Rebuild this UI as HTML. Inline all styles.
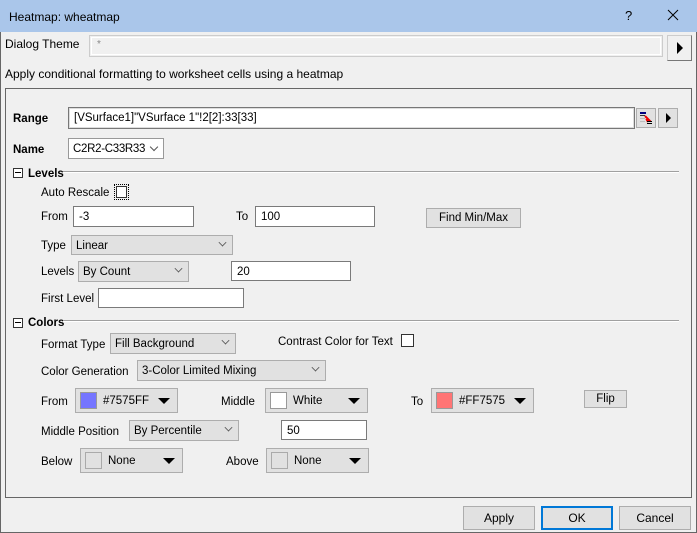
<!DOCTYPE html>
<html><head><meta charset="utf-8"><style>
*{box-sizing:border-box;margin:0;padding:0}
body{width:697px;height:533px;background:#f0f0f0;font-family:"Liberation Sans",sans-serif;font-size:11.5px;color:#000;position:relative;overflow:hidden}
.a{position:absolute;white-space:nowrap}
.t{position:absolute;white-space:nowrap;line-height:14px;margin-top:1px}
.b{font-weight:bold}
.in{position:absolute;background:#fff;border:1px solid #7a7a7a;padding-left:5px;line-height:20px}
.cb{position:absolute;background:#e1e1e1;border:1px solid #adadad;padding-left:4px;line-height:20px}
.cb .chev{position:absolute;right:6px;width:7px;height:7px;border-right:1px solid #555;border-bottom:1px solid #555;transform:rotate(45deg) scale(.8);top:3px}
.btn{position:absolute;background:#e1e1e1;border:1px solid #adadad;text-align:center}
.clr{position:absolute;background:#e1e1e1;border:1px solid #adadad}
.clr .sw{position:absolute;left:4px;top:3px;width:17px;height:17px;border:1px solid #999}
.clr .lb{position:absolute;left:27px;top:5px;line-height:14px}
.clr .ar{position:absolute;right:7px;top:9px;width:0;height:0;border-left:6px solid transparent;border-right:6px solid transparent;border-top:6px solid #000}
.plus{position:absolute;width:10px;height:10px;border:1px solid #333;background:#fff}
.plus:after{content:"";position:absolute;left:1px;top:3px;width:6px;height:1px;background:#000}
.ln{position:absolute;height:2px;border-top:1px solid #a0a0a0;border-bottom:1px solid #fff}
</style></head><body>
<div class="a" style="left:0;top:0;width:697px;height:32px;background:#aac6ea"></div>
<div class="t" style="left:9px;top:9px;font-size:12px">Heatmap: wheatmap</div>
<div class="t" style="left:625px;top:8px;font-size:13px">?</div>
<svg class="a" style="left:667px;top:9px" width="12" height="12"><path d="M1 1L11 11M11 1L1 11" stroke="#000" stroke-width="1"/></svg>
<div class="a" style="left:0;top:32px;width:1px;height:501px;background:#666"></div>
<div class="a" style="left:696px;top:32px;width:1px;height:501px;background:#666"></div>
<div class="a" style="left:0;top:532px;width:697px;height:1px;background:#666"></div>

<div class="t" style="left:5px;top:36px;font-size:12px">Dialog Theme</div>
<div class="a" style="left:89px;top:35px;width:574px;height:22px;border:1px solid #ccc;background:#f0f0f0"><div style="position:absolute;left:1px;top:1px;right:1px;bottom:1px;border:1px solid #fff"></div><span style="position:absolute;left:7px;top:3px;color:#888;font-size:10px">*</span></div>
<div class="a" style="left:667px;top:35px;width:25px;height:26px;background:#f0f0f0;border:1px solid #ccc;border-right-color:#777;border-bottom-color:#777"><div style="position:absolute;left:9px;top:6px;border-top:6px solid transparent;border-bottom:6px solid transparent;border-left:6px solid #000"></div></div>
<div class="t" style="left:5px;top:66px;font-size:12px">Apply conditional formatting to worksheet cells using a heatmap</div>

<div class="a" style="left:5px;top:88px;width:687px;height:410px;border:1px solid #666"></div>

<div class="t b" style="left:13px;top:111px">Range</div>
<div class="in" style="left:68px;top:107px;width:567px;height:22px;border-color:#777;box-shadow:inset 0 0 0 1px #ddd;line-height:20px">[VSurface1]"VSurface 1"!2[2]:33[33]</div>
<div class="btn" style="left:636px;top:108px;width:20px;height:20px;background:#e1e1e1"><svg width="18" height="18" style="position:absolute;left:0;top:0"><rect x="3" y="3" width="6" height="2" fill="#000080"/><rect x="3" y="6" width="5" height="1" fill="#333"/><rect x="3" y="9" width="5" height="1" fill="#bbb"/><rect x="3" y="12" width="5" height="1" fill="#bbb"/><path d="M8 7l4 4h-2l1 2" stroke="#e00" stroke-width="2" fill="none"/><rect x="10" y="12" width="5" height="1" fill="#000"/><rect x="10" y="14" width="5" height="1" fill="#000"/></svg></div>
<div class="btn" style="left:658px;top:108px;width:20px;height:20px"><div style="position:absolute;left:7px;top:4px;border-top:5px solid transparent;border-bottom:5px solid transparent;border-left:5px solid #000"></div></div>

<div class="t b" style="left:13px;top:142px">Name</div>
<div class="in" style="left:68px;top:138px;width:96px;height:21px;border-color:#999;padding-left:4px;letter-spacing:-0.3px">C2R2-C33R33<div style="position:absolute;right:6px;top:5px;width:6px;height:6px;border-right:1px solid #555;border-bottom:1px solid #555;transform:rotate(45deg)"></div></div>

<div class="plus" style="left:13px;top:168px"></div>
<div class="t b" style="left:28px;top:166px">Levels</div>
<div class="ln" style="left:63px;top:171px;width:616px"></div>

<div class="t" style="left:41px;top:185px">Auto Rescale</div>
<div class="a" style="left:114px;top:184px;width:15px;height:16px;border:1px dotted #000"><div style="position:absolute;left:1px;top:1px;width:11px;height:12px;border:1px solid #333;background:#fff"></div></div>

<div class="t" style="left:41px;top:209px">From</div>
<div class="in" style="left:73px;top:206px;width:121px;height:21px">-3</div>
<div class="t" style="left:236px;top:209px">To</div>
<div class="in" style="left:255px;top:206px;width:120px;height:21px">100</div>
<div class="btn" style="left:426px;top:208px;width:95px;height:20px;line-height:19px">Find Min/Max</div>

<div class="t" style="left:41px;top:238px">Type</div>
<div class="cb" style="left:71px;top:235px;width:162px;height:20px">Linear<div class="chev"></div></div>

<div class="t" style="left:41px;top:264px">Levels</div>
<div class="cb" style="left:78px;top:261px;width:111px;height:21px">By Count<div class="chev"></div></div>
<div class="in" style="left:231px;top:261px;width:120px;height:20px">20</div>

<div class="t" style="left:41px;top:291px">First Level</div>
<div class="in" style="left:98px;top:288px;width:146px;height:20px"></div>

<div class="plus" style="left:13px;top:318px"></div>
<div class="t b" style="left:28px;top:315px">Colors</div>
<div class="ln" style="left:63px;top:320px;width:616px"></div>

<div class="t" style="left:41px;top:337px">Format Type</div>
<div class="cb" style="left:110px;top:333px;width:126px;height:21px">Fill Background<div class="chev"></div></div>
<div class="t" style="left:278px;top:334px">Contrast Color for Text</div>
<div class="a" style="left:401px;top:334px;width:13px;height:13px;border:1px solid #333;background:#fff"></div>

<div class="t" style="left:41px;top:364px">Color Generation</div>
<div class="cb" style="left:137px;top:360px;width:189px;height:21px">3-Color Limited Mixing<div class="chev"></div></div>

<div class="t" style="left:41px;top:394px">From</div>
<div class="clr" style="left:75px;top:388px;width:103px;height:25px"><div class="sw" style="background:#7575ff"></div><div class="lb">#7575FF</div><div class="ar"></div></div>
<div class="t" style="left:221px;top:394px">Middle</div>
<div class="clr" style="left:265px;top:388px;width:103px;height:25px"><div class="sw" style="background:#fff"></div><div class="lb">White</div><div class="ar"></div></div>
<div class="t" style="left:411px;top:394px">To</div>
<div class="clr" style="left:431px;top:388px;width:103px;height:25px"><div class="sw" style="background:#ff7575"></div><div class="lb">#FF7575</div><div class="ar"></div></div>
<div class="btn" style="left:584px;top:390px;width:43px;height:18px;line-height:17px">Flip</div>

<div class="t" style="left:41px;top:424px">Middle Position</div>
<div class="cb" style="left:129px;top:420px;width:110px;height:21px">By Percentile<div class="chev"></div></div>
<div class="in" style="left:281px;top:420px;width:86px;height:20px">50</div>

<div class="t" style="left:41px;top:454px">Below</div>
<div class="clr" style="left:80px;top:448px;width:103px;height:25px"><div class="sw" style="background:#e1e1e1;border-color:#aaa"></div><div class="lb">None</div><div class="ar"></div></div>
<div class="t" style="left:226px;top:454px">Above</div>
<div class="clr" style="left:266px;top:448px;width:103px;height:25px"><div class="sw" style="background:#e1e1e1;border-color:#aaa"></div><div class="lb">None</div><div class="ar"></div></div>

<div class="btn" style="left:463px;top:506px;width:72px;height:24px;line-height:22px;font-size:12px">Apply</div>
<div class="btn" style="left:541px;top:506px;width:72px;height:24px;line-height:20px;font-size:12px;border:2px solid #0078d7">OK</div>
<div class="btn" style="left:619px;top:506px;width:72px;height:24px;line-height:22px;font-size:12px">Cancel</div>
</body></html>
